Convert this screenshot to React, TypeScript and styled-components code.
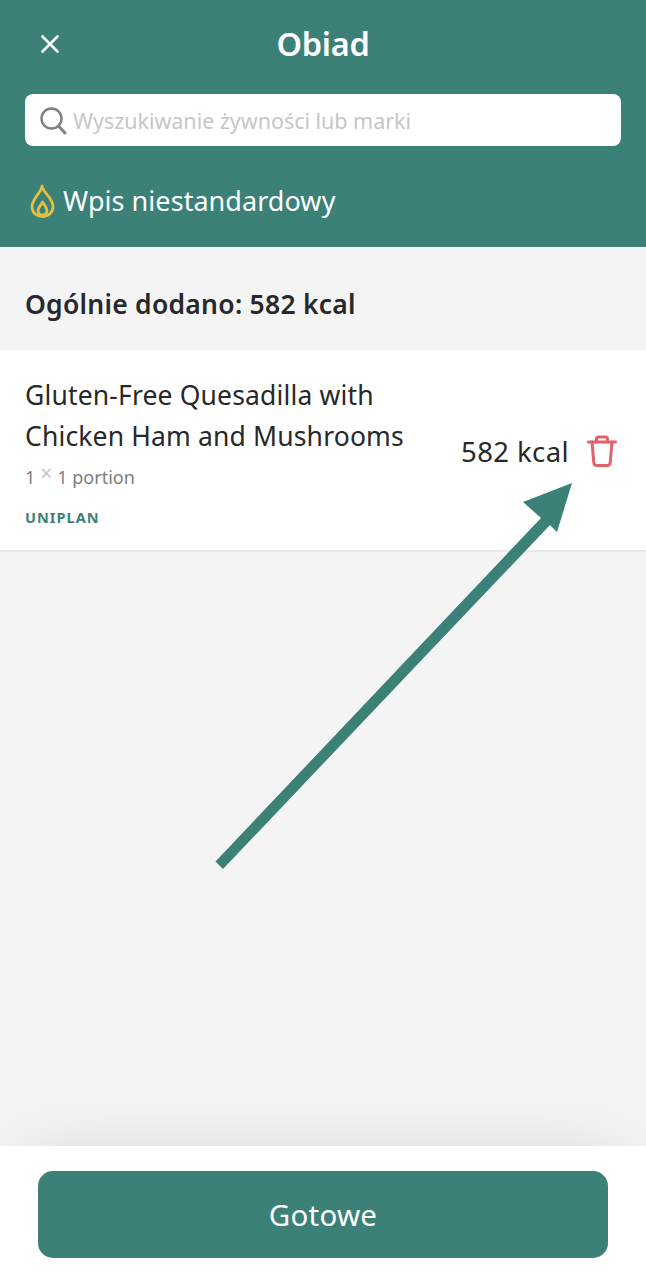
import React from "react";
import styled, { createGlobalStyle } from "styled-components";

const Global = createGlobalStyle`
  html, body { margin: 0; padding: 0; background: #f4f4f5; }
  * { box-sizing: border-box; }
`;
const Screen = styled.div`
  position: relative; width: 646px; height: 1280px; display: flex; flex-direction: column;
  background: #f4f4f5; overflow: hidden; font-family: "Noto Sans", "Liberation Sans", sans-serif; color: #27282a;
`;
const Header = styled.header`
  height: 247px; background: #3b8177; padding: 0 25px; display: flex; flex-direction: column; flex: none;
`;
const TopBar = styled.div`
  height: 94px; display: grid; grid-template-columns: 50px 1fr 50px; align-items: center; padding-bottom: 7px;
`;
const CloseBtn = styled.button`
  border: 0; background: none; padding: 0 0 0 13px; height: 24px; display: flex; align-items: center; color: #fff;
`;
const Title = styled.h1`
  margin: 0; text-align: center; color: #fff; font-size: 32.5px; font-weight: 600; letter-spacing: -0.3px; line-height: 40px;
`;
const Search = styled.div`
  height: 52px; background: #fff; border-radius: 8px; display: flex; align-items: center; padding-left: 14px; gap: 5px;
`;
const Placeholder = styled.span`
  font-size: 21.5px; color: #c6c6c8; letter-spacing: -0.03px;
`;
const CustomEntry = styled.div`
  display: flex; align-items: center; gap: 8px; margin-top: 35px; padding-left: 5px; color: #fff; font-size: 27px; line-height: 40px; letter-spacing: 0.05px;
`;
const Summary = styled.div`
  height: 103px; display: flex; align-items: center; padding: 10px 25px 0; font-size: 26.5px; font-weight: 600; flex: none; letter-spacing: 0.25px;
`;
const Row = styled.div`
  height: 202px; background: #fff; border-bottom: 2px solid #e9e9ea; display: flex; align-items: center; padding: 0 29px 0 25px; flex: none;
`;
const Info = styled.div`
  flex: 1; min-width: 0;
`;
const FoodName = styled.div`
  font-size: 26.5px; line-height: 40.5px; letter-spacing: 0.15px; margin-top: 1px; white-space: nowrap;
`;
const Portion = styled.div`
  display: flex; align-items: center; font-size: 18px; line-height: 26px; color: #7d7d80; margin-top: 8px;
`;
const Times = styled.span`
  color: #c4c4c6; font-size: 21px; line-height: 20px; margin: -8px 5px 0 5px;
`;
const Brand = styled.div`
  font-size: 14.5px; line-height: 18px; font-weight: 700; letter-spacing: 1.05px; color: #3b8177; margin-top: 18px;
`;
const Kcal = styled.div`
  font-size: 27.5px; margin: 3px 18px 0 0; white-space: nowrap; letter-spacing: 0.4px;
`;
const Spacer = styled.div`
  flex: 1;
`;
const Footer = styled.footer`
  height: 134px; flex: none; background: #fff; padding: 25px 38px 22px; box-shadow: 0 -6px 80px -22px rgba(0,0,0,.15); position: relative;
`;
const Done = styled.button`
  width: 100%; height: 87px; border: 0; border-radius: 15px; background: #3b8177; color: #fff;
  font-family: inherit; font-size: 29.5px; letter-spacing: 0.2px;
`;
const Arrow = styled.svg`
  position: absolute; left: 0; top: 0; pointer-events: none;
`;

export default function App() {
  return (
    <Screen>
      <Global />
      <Header>
        <TopBar>
          <CloseBtn aria-label="close">
            <svg width="24" height="24" viewBox="0 0 24 24" fill="none" stroke="#fff" strokeWidth="2.6" strokeLinecap="round"><path d="M4.5 4.5 19.5 19.5M19.5 4.5 4.5 19.5" /></svg>
          </CloseBtn>
          <Title>Obiad</Title>
          <span />
        </TopBar>
        <Search>
          <svg width="29" height="29" viewBox="0 0 29 29" fill="none" stroke="#808082" strokeLinecap="round">
            <circle cx="12.5" cy="12.5" r="10" strokeWidth="2.4" />
            <path d="M19.5 20 26 27" strokeWidth="3" />
          </svg>
          <Placeholder>Wyszukiwanie żywności lub marki</Placeholder>
        </Search>
        <CustomEntry>
          <svg width="25" height="34" viewBox="0 0 25 34" fill="none" stroke="#e6bf3e" strokeWidth="2.8" strokeLinejoin="round">
            <path d="M12 2C12 8 2 14 2 23c0 5.500 4.500 9.500 10.500 9.500S23 28.500 23 22.500C23 14 14 10 12 2Z" />
            <path d="M12.500 18c-1 3-4.500 5-4.500 8.500 0 2.600 2 4.500 4.500 4.500s4.500-2 4.500-4.500C17 23 14 21 12.500 18Z" />
          </svg>
          <span>Wpis niestandardowy</span>
        </CustomEntry>
      </Header>
      <Summary>Ogólnie dodano: 582 kcal</Summary>
      <Row>
        <Info>
          <FoodName>Gluten-Free Quesadilla with<br />Chicken Ham and Mushrooms</FoodName>
          <Portion>1<Times>×</Times>1 portion</Portion>
          <Brand>UNIPLAN</Brand>
        </Info>
        <Kcal>582 kcal</Kcal>
        <svg width="30" height="33" viewBox="0 0 30 33" fill="none" stroke="#e0636b" strokeWidth="3" strokeLinecap="round" strokeLinejoin="round">
          <path d="M1.500 8H28.500" />
          <path d="M9.500 8V5C9.500 3.900 10.400 3 11.500 3h7c1.100 0 2 .9 2 2V8" />
          <path d="M5 8l1.800 20.500c.1 1.700 1.400 3 3.200 3h10c1.800 0 3.100-1.300 3.200-3L25 8" />
        </svg>
      </Row>
      <Spacer />
      <Footer>
        <Done>Gotowe</Done>
      </Footer>
      <Arrow width="646" height="1280" viewBox="0 0 646 1280">
        <path d="M572 483 523 502 541 518 215.500 861.500 223 869 550 525 557 532Z" fill="#3b8177" />
      </Arrow>
    </Screen>
  );
}
